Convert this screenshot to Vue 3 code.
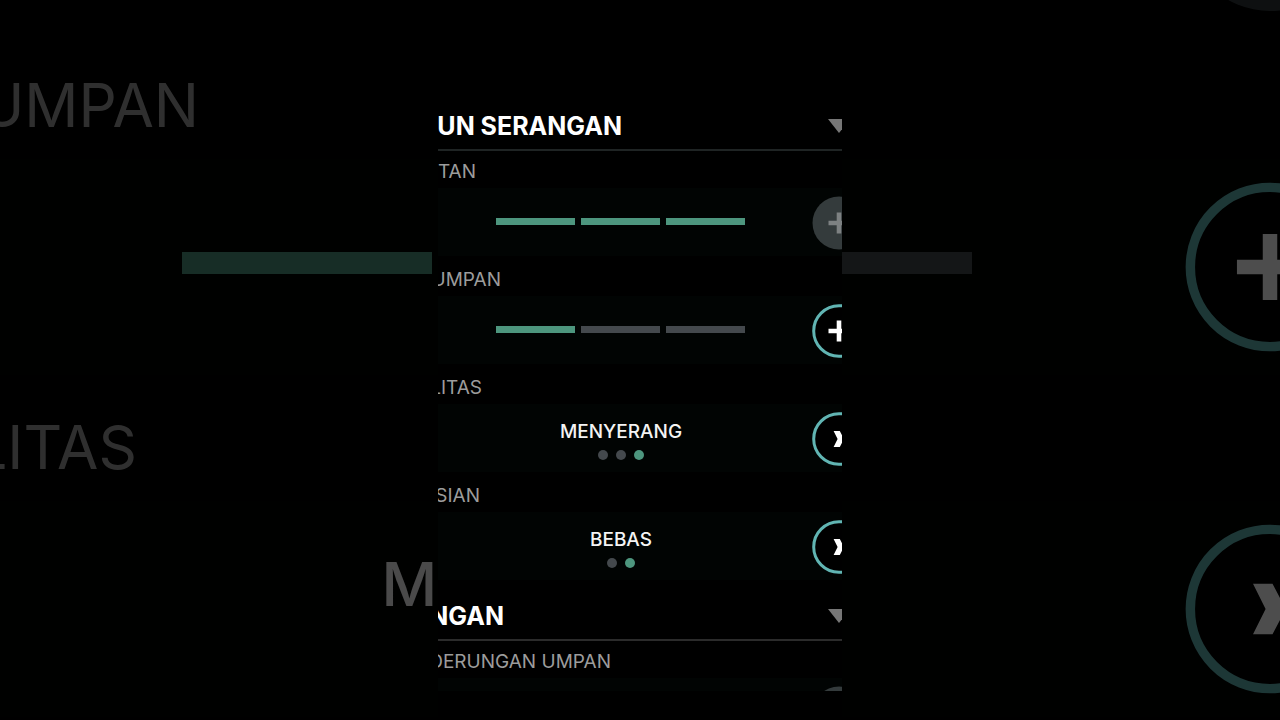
<script setup>
const backdropRows = [
  { kind: 'bars', label: 'UMPAN', shown: 199, level: 1, icon: 'plus' },
  { kind: 'picker', label: 'LITAS', shown: 137, value: 'M', dots: 3, active: 3, icon: 'next' }
]

const sections = [
  {
    title: 'UN SERANGAN',
    shown: 184,
    tone: 'cool',
    rows: [
      { kind: 'bars', label: 'TAN', shown: 38, level: 3, icon: 'plus', disabled: true },
      { kind: 'bars', label: 'UMPAN', shown: 63, level: 1, icon: 'plus' },
      { kind: 'picker', label: 'LITAS', shown: 44, value: 'MENYERANG', dots: 3, active: 3, icon: 'next' },
      { kind: 'picker', label: 'SIAN', shown: 42, value: 'BEBAS', dots: 2, active: 2, icon: 'next' }
    ]
  },
  {
    title: 'NGAN',
    shown: 66,
    tone: 'plain',
    rows: [
      { kind: 'peek', label: 'DERUNGAN UMPAN', shown: 173, icon: 'plus', disabled: true }
    ]
  }
]

const layers = [
  { name: 'backdrop', sections: [{ rows: backdropRows }] },
  { name: 'phone', sections }
]
</script>

<template>
  <main class="stage">
    <div
      v-for="layer in layers"
      :key="layer.name"
      :class="['layer', layer.name]"
      :inert="layer.name === 'backdrop'"
    >
      <div v-if="layer.name === 'backdrop'" class="passing">
        <svg class="disc" viewBox="0 0 54 54" aria-hidden="true"><circle cx="27" cy="27" r="27" /></svg>
      </div>
      <section v-for="(section, s) in layer.sections" :key="s" class="section">
        <header v-if="section.title" :class="['head', section.tone]">
          <h2 class="clip" :style="{ width: section.shown + 'px' }"><span>{{ section.title }}</span></h2>
          <button class="fold" type="button" :aria-label="section.title">
            <svg viewBox="0 0 22 14"><path d="M0 0H22L11 14Z" /></svg>
          </button>
        </header>
        <div class="rows">
          <div v-for="row in section.rows" :key="row.label" class="row">
            <h3 class="label clip" :style="{ width: row.shown + 'px' }"><span>{{ row.label }}</span></h3>
            <div :class="['card', row.kind]">
              <div v-if="row.kind === 'bars'" class="meter">
                <i v-for="n in 3" :key="n" :class="['bar', { on: n <= row.level }]"></i>
              </div>
              <div v-else-if="row.kind === 'picker'" class="choice">
                <span class="value">{{ row.value }}</span>
                <div class="dots">
                  <i v-for="n in row.dots" :key="n" :class="['dot', { on: n === row.active }]"></i>
                </div>
              </div>
              <div v-else></div>
              <button class="round" type="button" :disabled="row.disabled" :aria-label="row.label">
                <svg viewBox="0 0 54 54">
                  <circle v-if="row.disabled" class="fill" cx="27" cy="27" r="26.5" />
                  <circle v-else class="ring" cx="27" cy="27" r="25.3" />
                  <path v-if="row.icon === 'plus'" class="glyph" d="M24.7 16.5h4.6v8.2H38v4.6h-8.7v8.2h-4.6v-8.2h-8.2v-4.6h8.2Z" />
                  <path v-else class="glyph" d="M21.6 19H27.8L32 27L27.8 35H21.6L25.6 27Z" />
                </svg>
              </button>
            </div>
          </div>
        </div>
      </section>
    </div>
  </main>
</template>

<style>
body {
  margin: 0;
  background: #000;
}
</style>

<style scoped>
.stage {
  display: grid;
  grid-template-columns: 100%;
  height: 100vh;
  overflow: hidden;
  background: #000;
  color: #fff;
  font-family: Inter, "Liberation Sans", sans-serif;
}

.layer {
  grid-area: 1 / 1;
  box-sizing: border-box;
  height: 100vh;
  overflow: hidden;
}

.backdrop {
  --text: 60px;
  --value: 61px;
  --value-w: 390px;
  --label-h: 108px;
  --label-line: 108px;
  --card-h: 216px;
  --row-gap: 18px;
  --side: 127px;
  --side-gap: 32px;
  --round: 170px;
  --bar-w: 250px;
  --bar-h: 22px;
  --bar-gap: 20px;
  --lift: 8px;
  --drop: 4px;
  --shift: 0px;
  --line: 76px;
  --dot: 32px;
  --dot-gap: 25px;
  --stack: 22px;
  padding-top: 1px;
  opacity: 0.3;
}

.phone {
  --text: 19px;
  --value: 19px;
  --value-w: auto;
  --label-h: 34px;
  --label-line: 36px;
  --card-h: 68px;
  --row-gap: 6px;
  --side: 40px;
  --side-gap: 10px;
  --round: 54px;
  --bar-w: 79px;
  --bar-h: 7px;
  --bar-gap: 6px;
  --lift: 2px;
  --drop: 2px;
  --shift: 2px;
  --line: 26px;
  --dot: 10px;
  --dot-gap: 8px;
  --stack: 5px;
  z-index: 1;
  justify-self: center;
  aspect-ratio: 101 / 180;
  padding-top: 91px;
  background: #000;
}

.passing {
  display: flex;
  justify-content: flex-end;
  align-items: flex-end;
  box-sizing: border-box;
  height: 32px;
  margin-bottom: 18px;
  padding-bottom: 22px;
}

.disc {
  flex: none;
  width: 170px;
  height: 170px;
  margin-right: -75px;
  fill: #30373a;
}

.head {
  display: flex;
  align-items: center;
  justify-content: space-between;
  box-sizing: border-box;
  height: 60px;
  margin-bottom: 3px;
  padding-top: 12px;
  border-bottom: 2px solid #1f2424;
}

.head.plain {
  border-color: #2b2b2b;
}

.section + .section {
  margin-top: 1px;
}

.clip {
  display: flex;
  justify-content: flex-end;
  margin: 0;
  overflow: hidden;
  white-space: nowrap;
}

h2 {
  font-size: 25px;
  line-height: 32px;
  font-weight: 700;
}

button {
  padding: 0;
  border: 0;
  background: none;
  color: inherit;
}

svg {
  display: block;
}

.fold {
  flex: none;
  width: 22px;
  height: 14px;
  margin-right: -8px;
}

.fold svg {
  width: 22px;
  height: 14px;
  fill: #777;
}

.rows {
  display: grid;
  gap: var(--row-gap);
}

.label {
  height: var(--label-h);
  color: #9c9c9c;
  font-size: var(--text);
  line-height: var(--label-line);
  font-weight: 400;
}

.card {
  display: grid;
  grid-template-columns: 1fr var(--side);
  align-items: center;
  height: var(--card-h);
  background: #010403;
}

.card.peek {
  align-items: start;
  box-sizing: border-box;
  height: 13px;
  padding-top: 7px;
  overflow: hidden;
}

.meter {
  display: flex;
  justify-content: center;
  gap: var(--bar-gap);
  padding-bottom: var(--lift);
}

.bar {
  width: var(--bar-w);
  height: var(--bar-h);
  background: #44494d;
}

.bar.on {
  background: #4d967e;
}

.choice {
  display: flex;
  flex-direction: column;
  align-items: center;
  gap: var(--stack);
  padding-top: var(--drop);
  padding-left: var(--shift);
}

.value {
  width: var(--value-w);
  color: #f4f4f4;
  font-size: var(--value);
  line-height: var(--line);
  font-weight: 500;
}

.dots {
  display: flex;
  gap: var(--dot-gap);
}

.dot {
  width: var(--dot);
  height: var(--dot);
  border-radius: 50%;
  background: #44494d;
}

.dot.on {
  background: #4d967e;
}

.round {
  width: var(--round);
  height: var(--round);
  margin-left: var(--side-gap);
}

.phone .round {
  margin-top: 1px;
}

.round svg {
  width: 100%;
  height: 100%;
}

.ring {
  fill: #000;
  stroke: #61b5b3;
  stroke-width: 3;
}

.fill {
  fill: #343b3c;
}

.glyph {
  fill: #fff;
}

.round:disabled .glyph {
  fill: #7d8182;
}
</style>
